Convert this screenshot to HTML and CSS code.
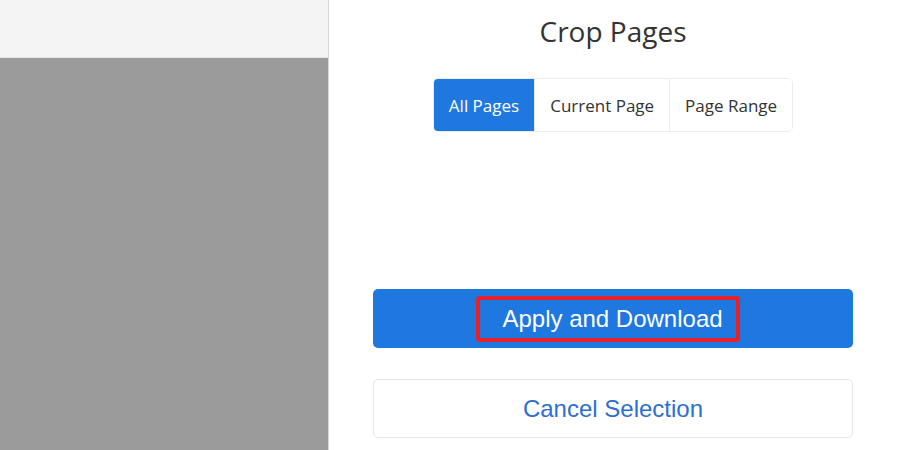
FILE: index.html
```html
<!DOCTYPE html>
<html>
<head>
<meta charset="utf-8">
<link rel="stylesheet" href="styles.css">
</head>
<body>
<div class="app">
  <div class="viewer">
    <div class="toolbar"></div>
    <div class="canvas"></div>
  </div>
  <div class="panel">
    <h1 class="title">Crop Pages</h1>
    <div class="segmented">
      <button class="seg active">All Pages</button>
      <button class="seg">Current Page</button>
      <button class="seg">Page Range</button>
    </div>
    <div class="actions">
      <button class="btn primary"><span class="highlight">Apply and Download</span></button>
      <button class="btn secondary">Cancel Selection</button>
    </div>
  </div>
</div>
</body>
</html>
```
FILE: styles.css
```css
html, body {
  margin: 0;
  padding: 0;
  height: 100%;
  background: #ffffff;
}
.app {
  display: flex;
  height: 450px;
  width: 900px;
  overflow: hidden;
}
.viewer {
  width: 328px;
  border-right: 1px solid #d8d8d8;
  display: flex;
  flex-direction: column;
}
.toolbar {
  height: 57px;
  background: #f4f4f4;
  border-bottom: 1px solid #e4e4e4;
}
.canvas {
  flex: 1;
  background: #9b9b9b;
}
.panel {
  flex: 1;
  display: flex;
  flex-direction: column;
  align-items: center;
  padding-right: 3px;
}
.title {
  margin: 12px 0 0 0;
  font-family: "Open Sans", "Noto Sans", sans-serif;
  font-weight: 400;
  font-size: 28px;
  line-height: 38px;
  color: #333333;
}
.segmented {
  margin-top: 28px;
  display: flex;
  border: 1px solid #ececec;
  border-radius: 5px;
  overflow: hidden;
}
.seg {
  height: 52px;
  border: none;
  border-left: 1px solid #ececec;
  background: #ffffff;
  font-family: "Open Sans", "Noto Sans", sans-serif;
  font-size: 17px;
  color: #333333;
  padding: 0 15px;
  margin: 0;
}
.seg:first-child {
  border-left: none;
}
.seg.active {
  background: #1f77e0;
  color: #ffffff;
}
.actions {
  margin-top: 157px;
  display: flex;
  flex-direction: column;
  gap: 31px;
}
.btn {
  width: 480px;
  height: 59px;
  border-radius: 5px;
  font-family: "Liberation Sans", Arial, sans-serif;
  font-size: 24px;
  margin: 0;
  padding: 0;
  display: flex;
  align-items: center;
  justify-content: center;
}
.primary {
  background: #1f77e0;
  border: none;
  color: #ffffff;
}
.highlight {
  display: inline-block;
  height: 38px;
  line-height: 38px;
  padding: 0 13px 0 22px;
  border: 4px solid #e8202a;
  border-radius: 4px;
  margin-right: 10px;
}
.secondary {
  background: #ffffff;
  border: 1px solid #e6e6e6;
  color: #2d6fcf;
}
```
